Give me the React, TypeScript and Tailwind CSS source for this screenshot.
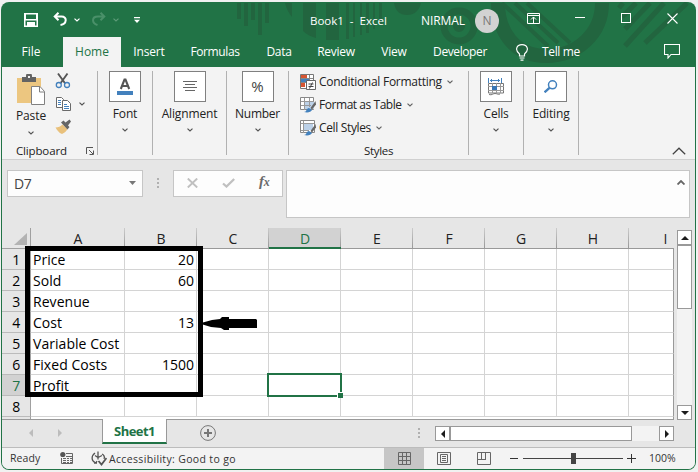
import type { ReactNode } from "react";

const ui = "font-['Open_Sans','Noto_Sans',sans-serif]";

function Chevron({ className = "" }: { className?: string }) {
  return (
    <svg className={`h-[4px] w-[6px] shrink-0 ${className}`} viewBox="0 0 6 4" fill="none" stroke="currentColor" strokeWidth="1.2">
      <path d="M.5.6 3 3 5.5.6" />
    </svg>
  );
}

function Separator() {
  return <div className="mt-1 h-[84px] w-px shrink-0 bg-[#b1b1b1]" />;
}

function BigGroup({ label, width, tracking = "", children }: { label: string; width: string; tracking?: string; children: ReactNode }) {
  return (
    <div className={`flex shrink-0 flex-col items-center pt-1 ${width}`}>
      <div className="flex h-[31px] w-8 items-center justify-center border border-[#808080] bg-white">{children}</div>
      <span className={`mt-[3px] text-[12px] leading-[18px] whitespace-nowrap ${tracking}`}>{label}</span>
      <Chevron className="mt-[5px] text-[#555]" />
    </div>
  );
}

function Clipboard() {
  return (
    <div className="w-[95px] shrink-0">
      <div className="flex h-[75px]">
        <div className="flex w-[47px] flex-col items-center pl-[11px]">
          <svg className="mt-[7px] h-[32px] w-[30px] shrink-0" viewBox="18 74 30 32">
            <path d="M19 78h24v25H19z" fill="#ecc680" />
            <path d="M24 77h4v-1a3 3 0 0 1 6 0v1h4v5H24z" fill="#636363" />
            <path d="M30 76h2v2h-2z" fill="#f3f3f3" />
            <path d="M33.500 86.500h8.500l4.500 5v13h-13z" fill="#fff" stroke="#808080" />
            <path d="M41.500 86.500v5.500h5" fill="none" stroke="#808080" />
          </svg>
          <span className="mt-[1px] text-[12px] leading-[18px] tracking-[-0.1px]">Paste</span>
          <Chevron className="mt-[6px] text-[#555]" />
        </div>
        <div className="flex w-[40px] flex-col pt-[5px] pl-[6px]">
          <svg className="h-[17px] w-[16px]" viewBox="55 72 16 17" fill="none">
            <path d="m58 73.500 7.200 10M67.500 73.500l-7.200 10" stroke="#555" strokeWidth="1.900" />
            <circle cx="58.800" cy="85" r="2.500" stroke="#4381bd" strokeWidth="1.300" />
            <circle cx="67" cy="85" r="2.500" stroke="#4381bd" strokeWidth="1.300" />
          </svg>
          <div className="mt-[7px] flex items-center">
            <svg className="h-[16px] w-[17px]" viewBox="54 96 17 16" fill="#fff" stroke="#6a6a6a">
              <path d="M55.500 97.500h5l2 2v8h-7z" />
              <path d="M57 100.500h3m-3 2h3m-3 2h3" stroke="#4381bd" />
              <path d="M61.500 100.500h5l3 3v7h-8z" />
              <path d="M63 104.500h3m-3 2h5m-5 2h5" stroke="#4381bd" />
            </svg>
            <Chevron className="ml-[7px] text-[#555]" />
          </div>
          <svg className="mt-[7px] h-[16px] w-[17px]" viewBox="55 119 17 16">
            <path d="M55.500 127.500c3 0 5-1 7-3l5 4.500c-1 2-3 4-5.500 5-3-1-5-4-6.500-6.500z" fill="#e9c17c" />
            <path d="m61 122.500 2.500-2 2 2 4-3 1.500 2-3 4 1.500 1.500-2 2.500z" fill="#666" />
          </svg>
        </div>
      </div>
      <div className="flex items-center pl-[14px]">
        <span className="w-[51px] text-[11.500px] leading-[18px] tracking-[-0.15px] whitespace-nowrap">Clipboard</span>
        <svg className="ml-[19px] h-[8px] w-[8px] shrink-0" viewBox="0 0 8 8" fill="none" stroke="#555">
          <path d="M.5 7V.5H7M3 3l4 4M3.500 7.500h4v-4" />
        </svg>
      </div>
    </div>
  );
}

function StyleRow({ label, tracking, children }: { label: string; tracking: string; children: ReactNode }) {
  return (
    <div className="flex h-[23px] items-center">
      <svg className="h-[16px] w-[16px] shrink-0" viewBox="0 0 16 16">{children}</svg>
      <span className={`ml-[3px] text-[12px] whitespace-nowrap ${tracking}`}>{label}</span>
      <Chevron className="ml-[5px] text-[#666]" />
    </div>
  );
}

function StylesGroup() {
  return (
    <div className="w-[179px] shrink-0">
      <div className="h-[75px] pt-[3px] pl-[11px]">
        <StyleRow label="Conditional Formatting" tracking="tracking-[-0.27px]">
          <path d="M.5.5h13v14H.5z" fill="#fff" stroke="#777" />
          <path d="M1 1h6v3H1zM1 9h4v4H1z" fill="#d65532" />
          <path d="M1 5h8v3H1z" fill="#4381bd" />
          <path d="M9.500 1v5M1 4.500h12M1 8.500h6" stroke="#888" fill="none" />
          <path d="M6.500 6.500h9v9h-9z" fill="#fff" stroke="#666" />
          <path d="M8.500 10h5m-5 2.500h5m-1-4-3 6" stroke="#444" fill="none" />
        </StyleRow>
        <StyleRow label="Format as Table" tracking="tracking-[-0.45px]">
          <path d="M.5.5h13v12H.5z" fill="#fff" stroke="#888" />
          <path d="M5 4h9v8H5z" fill="#bcd1e8" />
          <path d="M4.500 1v12M9.500 1v9M1 4.500h13M1 8.500h10" stroke="#999" fill="none" />
          <path d="m15.500 4-5 7 1.500 1.500 4-5z" fill="#666" />
          <path d="M4 15c3 0 2-4 5-4l3 2c-1 2-4 3-8 2z" fill="#4381bd" />
        </StyleRow>
        <StyleRow label="Cell Styles" tracking="tracking-[-0.35px]">
          <path d="M.5.500h14v12H.5z" fill="#fff" stroke="#888" />
          <path d="M3 4h10v6H3z" fill="#bcd1e8" />
          <path d="M3.500 1v12M1 3.500h13M1 10.500h8" stroke="#999" fill="none" />
          <path d="m15.500 4-5 7 1.500 1.500 4-5z" fill="#666" />
          <path d="M4 15c3 0 2-4 5-4l3 2c-1 2-4 3-8 2z" fill="#4381bd" />
        </StyleRow>
      </div>
      <div className="text-center text-[11.500px] leading-[18px] tracking-[-0.3px]">Styles</div>
    </div>
  );
}

function Ribbon() {
  return (
    <div className="flex h-[93px] shrink-0 border-b border-[#d0d0d0] bg-[#f3f3f3] text-[#222]">
      <Clipboard />
      <Separator />
      <BigGroup label="Font" width="w-[54px]" tracking="tracking-[-0.15px]">
        <svg className="mt-[-1px] h-[17px] w-[16px]" viewBox="0 0 16 17">
          <path d="m3.800 11 3.700-9.500h1L12.200 11M5.500 8h5" fill="none" stroke="#555" strokeWidth="2.100" />
          <path d="M0 13h16v4H0z" fill="#4381bd" />
        </svg>
      </BigGroup>
      <Separator />
      <BigGroup label="Alignment" width="w-[73px]" tracking="tracking-[-0.15px]">
        <svg className="mt-[-1px] h-[10px] w-[14px]" viewBox="0 0 14 10" stroke="#666">
          <path d="M0 .5h14M2 3.500h10M0 6.500h14M2 9.500h10" />
        </svg>
      </BigGroup>
      <Separator />
      <BigGroup label="Number" width="w-[61px]" tracking="tracking-[-0.25px]">
        <span className="text-[15px] leading-none text-[#444]">%</span>
      </BigGroup>
      <Separator />
      <StylesGroup />
      <Separator />
      <BigGroup label="Cells" width="w-[54px]" tracking="tracking-[-0.25px]">
        <svg className="h-[18px] w-[16px]" viewBox="0 0 16 18" fill="none">
          <path d="M.5 0v5M13.500 0v5M2 2.500h10M4 1 2.500 2.500 4 4M10 1l1.500 1.500L10 4" stroke="#4381bd" />
          <path d="M.5 5.500h15v9.500H.5z" fill="#fff" stroke="#777" />
          <path d="M4.500 5v10M8.500 5v10M12.500 5v10M0 8.500h16M0 12.500h16" stroke="#999" />
          <path d="M4 8h5v4H4z" fill="#3977b5" />
          <path d="M1 16.500c3 1 4-1 6-1s3 1.500 5 .5" stroke="#777" />
        </svg>
      </BigGroup>
      <Separator />
      <BigGroup label="Editing" width="w-[54px]" tracking="tracking-[-0.15px]">
        <svg className="mt-[-1px] h-[13px] w-[14px]" viewBox="0 0 14 13" fill="none" stroke="#4381bd">
          <circle cx="8.500" cy="4.800" r="4" strokeWidth="1.500" />
          <path d="m5.500 7.800-5 4.500" strokeWidth="2.400" />
        </svg>
      </BigGroup>
      <Separator />
      <div className="flex flex-1 items-end justify-end pr-[9px] pb-[4px]">
        <svg className="h-[8px] w-[14px]" viewBox="0 0 14 8" fill="none" stroke="#444" strokeWidth="1.200">
          <path d="m.8 7.200 6.200-6 6.200 6" />
        </svg>
      </div>
    </div>
  );
}

function HeaderArt() {
  return (
    <svg className="absolute inset-0 h-[65px] w-[695px]" viewBox="1 2 695 65" fill="#22653f">
      <path d="M237 3h4v16h-4zM244 3h4v23h-4zM251 3h4v17h-4zM258 3h4v32h-4zM265 3h4v20h-4zM285 3h7v14q-5-6-7-14zM303 3h13v35q-8-2-13-7zM326 3h13v37h-13zM346 3h3v36h-3zM353 3h2v34h-2zM360 3h2v32h-2zM366 3h3v30h-3zM373 3h2v26h-2zM379 3h3v22h-3zM394 3h27q-3 12-14 12T394 3z" />
      <g fill="none" stroke="#22653f">
        <circle cx="459" cy="26" r="15" strokeWidth="7" />
        <circle cx="459" cy="26" r="3" strokeWidth="6" />
        <path d="M498 3c0 28 16 53 48 53s56-23 56-53" strokeWidth="14" />
        <path d="m502 3 46 43M515 3l43 40M527 3l43 40" strokeWidth="4" />
        <path d="m623 3-4 5M636 3l-14 14M650 3l-25 26M664 3l-39 43M687 3l-42 40" strokeWidth="5" />
      </g>
    </svg>
  );
}

function TitleBar() {
  return (
    <div className="relative flex h-[35px] items-center">
      <svg className="ml-[23px] h-[14px] w-[14px]" viewBox="0 0 14 14" fill="#fff">
        <path fillRule="evenodd" d="M0 0h14v14H0zM2 1.500v4.500h10V1.500zM1.500 7.500v5H3V9h8v3.500h1.500v-5z" />
        <path d="M5 10h2v3H5z" fill="#fff" />
      </svg>
      <svg className="mt-[-1px] ml-[15px] h-[14px] w-[14px]" viewBox="0 0 14 14" fill="none" stroke="#fff" strokeWidth="2">
        <path d="M5.500.7 1.700 4.500l3.800 3.800M2 4.500h6.500c6 0 5.500 7.500-1 8.500" />
      </svg>
      <Chevron className="ml-[7px] text-white" />
      <svg className="mt-[-1px] ml-[12px] h-[14px] w-[14px]" viewBox="0 0 14 14" fill="none" stroke="#4a9069" strokeWidth="2">
        <path d="m8.500.7 3.800 3.800-3.800 3.800M12 4.500H6C-.5 4.500-.5 11 5.500 13" />
      </svg>
      <Chevron className="ml-[7px] text-[#5c9a77]" />
      <svg className="ml-[15px] h-[6px] w-[6px]" viewBox="0 0 6 6" fill="#fff">
        <path d="M0 0h6v1.200H0zM0 2.800h6L3 6z" />
      </svg>
      <span className="mt-[2px] ml-[170px] w-[111px] text-[11.500px] whitespace-pre">Book1  -  Excel</span>
      <span className="mt-[2px] w-[54px] text-[12px] tracking-[-0.1px]">NIRMAL</span>
      <span className="mt-[3px] flex h-6 w-6 items-center justify-center rounded-full bg-[#d2d2d2] text-[12px] text-[#777]">N</span>
      <svg className="mt-[-2px] ml-[28px] h-[11px] w-[13px]" viewBox="0 0 13 11" fill="none" stroke="#fff">
        <path d="M.5.500h12v10H.5zM1 2.500h11M6.500 10V4M4 6.500 6.500 4 9 6.500" />
      </svg>
      <span className="mt-[-5px] ml-[35px] h-px w-[10px] bg-white" />
      <span className="mt-[-3px] ml-[36px] h-[10px] w-[10px] border border-white" />
      <svg className="mt-[-3px] ml-[36px] h-[11px] w-[11px]" viewBox="0 0 11 11" stroke="#fff" strokeWidth="1.100">
        <path d="m.5.500 10 10M10.500.500l-10 10" />
      </svg>
    </div>
  );
}

const tabs = [
  { label: "File", cls: "w-[62px] pr-[2px]" },
  { label: "Home", cls: "w-[58px] bg-[#f3f3f3] text-[#217346]" },
  { label: "Insert", cls: "w-[56px] tracking-[-0.15px]" },
  { label: "Formulas", cls: "w-[76px] tracking-[-0.4px]" },
  { label: "Data", cls: "w-[52px] tracking-[-0.3px]" },
  { label: "Review", cls: "w-[62px] tracking-[-0.25px]" },
  { label: "View", cls: "w-[54px] tracking-[-0.2px]" },
  { label: "Developer", cls: "w-[78px] tracking-[-0.4px]" },
];

function MenuTabs() {
  return (
    <div className="relative flex h-[30px] text-[12px]">
      {tabs.map((t) => (
        <span key={t.label} className={`flex items-center justify-center ${t.cls}`}>{t.label}</span>
      ))}
      <span className="flex flex-1 items-center">
        <svg className="ml-[17px] h-[17px] w-[12px]" viewBox="0 0 12 17" fill="none" stroke="#fff" strokeWidth="1.200">
          <path d="M3.500 12V10C-1.500 6 .5.700 6 .700S13.500 6 8.500 10v2zM3.500 14h5M4.500 16.200h3" />
        </svg>
        <span className="ml-[14px] tracking-[-0.35px]">Tell me</span>
        <svg className="mt-[-2px] ml-auto mr-[16px] h-[15px] w-[16px]" viewBox="0 0 16 15" fill="none" stroke="#fff" strokeWidth="1.100">
          <path d="M.5.500h15v10H7l-3 3.500v-3.500H.5z" />
        </svg>
      </span>
    </div>
  );
}

function FormulaBar() {
  return (
    <div className="flex h-[68px] shrink-0 items-start pt-[10px] pl-[5px]">
      <div className="flex h-[27px] w-[136px] items-center justify-between border border-[#c6c6c6] bg-[#fdfdfd] pr-[6px] pl-[6px] text-[14px] text-[#444]">
        <span className="tracking-[-0.3px]">D7</span>
        <svg className="mt-[-1px] h-[4px] w-[7px]" viewBox="0 0 7 4" fill="#777"><path d="M0 0h7L3.500 4z" /></svg>
      </div>
      <div className="mt-[8px] ml-[14px] flex w-[2px] flex-col gap-[2px]">
        <i className="h-[2px] w-[2px] bg-[#b0b0b0]" /><i className="h-[2px] w-[2px] bg-[#b0b0b0]" /><i className="h-[2px] w-[2px] bg-[#b0b0b0]" />
      </div>
      <div className="ml-[14px] flex h-[27px] w-[110px] items-center border border-[#c6c6c6] bg-[#fdfdfd]">
        <svg className="mt-[-1px] ml-[13px] h-[10px] w-[11px]" viewBox="0 0 11 10" stroke="#c0c0c0" strokeWidth="1.900"><path d="m.8.500 9.400 9M10.200.500l-9.400 9" /></svg>
        <svg className="mt-[-1px] ml-[24px] h-[10px] w-[13px]" viewBox="0 0 13 10" fill="none" stroke="#c0c0c0" strokeWidth="2.300"><path d="m1 5.500 3.500 3L12.200 1" /></svg>
        <span className="mt-[-4px] ml-[24px] font-['Liberation_Serif',serif] text-[15px] font-bold tracking-[-0.3px] text-[#6a6a6a] italic">f<span className="text-[12px]">x</span></span>
      </div>
      <div className="ml-[3px] flex h-[48px] w-[404px] justify-end border border-[#c6c6c6] bg-[#fdfdfd] pt-[9px] pr-[4px]">
        <svg className="h-[5px] w-[8px]" viewBox="0 0 8 5" fill="none" stroke="#666" strokeWidth="1.800"><path d="M.5 4.500 4 1l3.500 3.500" /></svg>
      </div>
    </div>
  );
}

const columns = [
  { name: "A", w: "w-[94px]" },
  { name: "B", w: "w-[72px]" },
  { name: "C", w: "w-[72px]" },
  { name: "D", w: "w-[72px]" },
  { name: "E", w: "w-[72px]" },
  { name: "F", w: "w-[72px]" },
  { name: "G", w: "w-[72px]" },
  { name: "H", w: "w-[72px]" },
  { name: "I", w: "w-[45px] pl-[28px]" },
];

const data: [string, string][] = [
  ["Price", "20"], ["Sold", "60"], ["Revenue", ""], ["Cost", "13"],
  ["Variable Cost", ""], ["Fixed Costs", "1500"], ["Profit", ""], ["", ""],
];

function Sheet() {
  return (
    <div className="relative h-[192px] w-[672px] shrink-0 overflow-hidden text-[14px] text-black">
      <div className="flex h-[21px]">
        <div className="flex w-[29px] items-end justify-end border-r border-b border-[#a0a0a0] pr-[3px] pb-[3px]">
          <svg className="h-[12px] w-[13px]" viewBox="0 0 13 12" fill="#b3b3b3"><path d="M13 0v12H0z" /></svg>
        </div>
        {columns.map((c) => (
          <div
            key={c.name}
            className={`flex items-center justify-center ${c.w} ${
              c.name === "D" ? "border-b-2 border-[#217346] bg-[#d2d2d2] pt-px text-[#217346]" : "border-b border-[#999] text-[#222]"
            } ${c.name === "I" ? "" : "bg-linear-to-b from-[#ccc] to-[#999] bg-[length:1px_100%] bg-right bg-no-repeat"}`}
          >
            {c.name}
          </div>
        ))}
      </div>
      {data.map(([label, value], i) => (
        <div key={i} className="flex h-[21px]">
          <div
            className={`flex w-[29px] items-center justify-center border-r border-b border-r-[#a0a0a0] border-b-[#bbb] tracking-[-0.3px] ${
              i === 6 ? "bg-[#d2d2d2] text-[#217346]" : ""
            }`}
          >
            {i + 1}
          </div>
          {columns.map((c) => (
            <div
              key={c.name}
              className={`flex items-center border-r border-b border-[#d4d4d4] bg-white whitespace-nowrap ${
                c.name === "B" ? "justify-end pr-[2px]" : "pl-[2px] tracking-[0.05px]"
              } ${c.name === "I" ? "w-[45px] border-r-[#999]" : c.w}`}
            >
              {c.name === "A" ? label : c.name === "B" ? value : null}
            </div>
          ))}
        </div>
      ))}
      <div className="flex h-[3px] border-b border-[#999]">
        <div className="w-[29px] border-r border-[#a0a0a0]" />
        <div className="flex-1 border-r border-[#999] bg-white" />
      </div>
      <div className="absolute top-[18px] left-[23px] h-[151px] w-[178px] border-[5px] border-black" />
      <svg className="absolute top-[88px] left-[199px] h-[16px] w-[56px]" viewBox="202 316 56 16">
        <path d="m202 323 11-3 8-1 2-2h7v2h27l1 1v8h-28v2h-5l-3-2-10-1-10-3z" fill="#000" />
      </svg>
      <div className="absolute top-[145px] left-[265px] h-[24px] w-[75px] border-2 border-[#217346]" />
      <div className="absolute top-[164px] left-[335px] h-[6px] w-[6px] border-t border-l border-white bg-[#217346]" />
    </div>
  );
}

function ScrollButton({ d }: { d: string }) {
  return (
    <div className="flex h-[15px] w-[15px] shrink-0 items-center justify-center border border-[#999] bg-white">
      <svg className="h-[8px] w-[8px]" viewBox="0 0 8 8" fill="#1c1c1c"><path d={d} /></svg>
    </div>
  );
}

function SheetTabs() {
  return (
    <div className="flex h-[28px] shrink-0 items-start border-b border-[#bcbcbc]">
      <svg className="mt-[9px] ml-[26px] h-[8px] w-[35px]" viewBox="0 0 35 8" fill="#bcbcbc"><path d="M5 0v8L1 4zM30 0v8l4-4z" /></svg>
      <div className="relative mt-[-1px] ml-[39px] flex h-[25px] w-[65px] items-center justify-center border-x border-b-2 border-x-[#999] border-b-[#217346] bg-white pt-[3px] text-[13px] font-bold tracking-[-0.55px] text-[#217346]">Sheet1</div>
      <svg className="mt-[5px] ml-[33px] h-[16px] w-[16px]" viewBox="0 0 16 16" fill="none" stroke="#777">
        <circle cx="8" cy="8" r="7.400" />
        <path d="M8 4v8M4 8h8" strokeWidth="2" />
      </svg>
      <div className="mt-[8px] ml-[202px] flex w-[2px] flex-col gap-[2px]">
        <i className="h-[2px] w-[2px] bg-[#b0b0b0]" /><i className="h-[2px] w-[2px] bg-[#b0b0b0]" /><i className="h-[2px] w-[2px] bg-[#b0b0b0]" />
      </div>
      <div className="mt-[6px] ml-[15px] flex w-[239px] bg-[#f3f3f3]">
        <ScrollButton d="M6 0v8L2 4z" />
        <div className="h-[15px] w-[182px] border border-[#999] bg-white" />
        <div className="flex-1" />
        <ScrollButton d="M2 0v8l4-4z" />
      </div>
    </div>
  );
}

function StatusBar() {
  return (
    <div className="flex h-[21px] shrink-0 items-center bg-[#f3f3f3] text-[10.500px] text-[#333]">
      <span className="ml-[8px] w-[50px] tracking-[0.1px]">Ready</span>
      <svg className="mt-[-2px] h-[14px] w-[13px]" viewBox="60 450 13 14" fill="none" stroke="#666">
        <path d="M66 452.500h6.500v10h-11V457M66 455.500h6M63 457.500h3m1 0h2m1 0h2M63 459.500h3m1 0h2m1 0h2M63 461.500h3m1 0h2m1 0h2" />
        <circle cx="62.800" cy="453.500" r="2.600" fill="#555" stroke="none" />
      </svg>
      <svg className="ml-[18px] h-[15px] w-[16px]" viewBox="91 450 16 15" fill="none" stroke="#555" strokeWidth="1.300">
        <path d="M95 452c-4 3-4 8 1 10l1-2M94 462h3M98 450.500v8M95 454.500l3 2 4-2M102 453c2 1 3 3 2 5" />
        <path d="m98.500 460 3 3.500 5-6.500" strokeWidth="1.800" />
      </svg>
      <span className="mt-[2px] ml-[2px] w-[275px] tracking-[0.34px] whitespace-nowrap">Accessibility: Good to go</span>
      <span className="flex h-full w-[40px] items-center justify-center bg-[#c6c6c6]">
        <svg className="h-[13px] w-[13px]" viewBox="0 0 13 13" fill="none" stroke="#666"><path d="M.5.500h12v12H.5zM4.500 0v13M8.500 0v13M0 4.500h13M0 8.500h13" /></svg>
      </span>
      <svg className="mt-[-1px] ml-[13px] h-[13px] w-[14px]" viewBox="0 0 14 13" fill="none" stroke="#666"><path d="M.5.500h13v12H.5zM3.500 2.500h7v8h-7zM5 4.500h4M5 6.500h4M5 8.500h4" /></svg>
      <svg className="mt-[-1px] ml-[26px] h-[13px] w-[14px]" viewBox="0 0 14 13" fill="none" stroke="#666"><path d="M.5.500h13v12H.5zM4.500 0v7.500M8.500 0v7.500M0 7.500h9" /></svg>
      <span className="mt-[-1px] ml-[19px] h-px w-[8px] bg-[#333]" />
      <span className="ml-[5px] flex h-[11px] w-[100px] items-center bg-linear-to-b from-[#444] to-[#444] bg-[length:100%_1px] bg-center bg-no-repeat">
        <span className="ml-[48px] h-[11px] w-[5px] bg-[#444]" />
      </span>
      <svg className="mt-[-1px] ml-[4px] h-[9px] w-[9px]" viewBox="0 0 9 9" stroke="#333"><path d="M0 4.500h9M4.500 0v9" /></svg>
      <span className="ml-[13px]">100%</span>
    </div>
  );
}

export default function App() {
  return (
    <div className={`h-[472px] w-[698px] overflow-hidden bg-[#f1f1f1] pt-[2px] pl-px ${ui}`}>
      <div className="flex h-[468px] w-[695px] flex-col overflow-hidden rounded-[8px] bg-[#217346]">
        <header className="relative h-[65px] shrink-0 text-white">
          <HeaderArt />
          <TitleBar />
          <MenuTabs />
        </header>
        <main className="mx-px flex h-[402px] flex-col overflow-hidden rounded-b-[7px] bg-[#e6e6e6] text-[#111]">
          <Ribbon />
          <FormulaBar />
          <div className="flex h-[192px] shrink-0">
            <Sheet />
            <div className="mt-[2px] ml-[3px] flex h-[190px] w-[15px] flex-col bg-[#f3f3f3]">
              <ScrollButton d="M0 6h8L4 2z" />
              <div className="h-[64px] border border-[#999] bg-white" />
              <div className="flex-1" />
              <ScrollButton d="M0 2h8L4 6z" />
            </div>
          </div>
          <SheetTabs />
          <StatusBar />
        </main>
      </div>
    </div>
  );
}
